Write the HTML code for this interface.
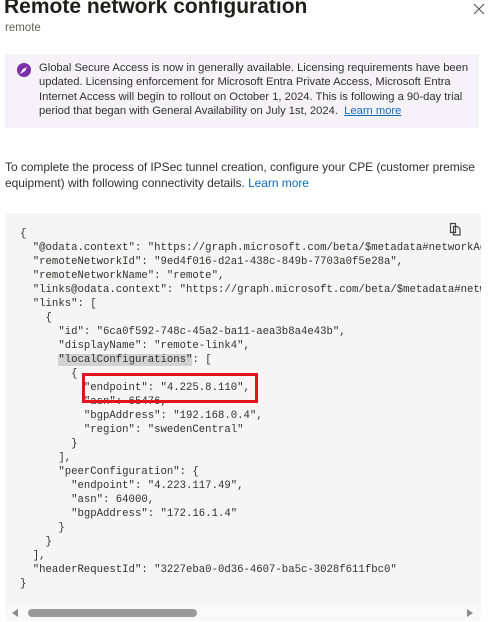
<!DOCTYPE html>
<html><head><meta charset="utf-8"><style>
html,body{margin:0;padding:0;background:#fff;width:491px;height:622px;overflow:hidden;font-family:"Liberation Sans",sans-serif;color:#323130}
.t{position:absolute;left:4px;top:-5px;font-size:21px;font-weight:600;color:#201f1e;white-space:nowrap}
.s{position:absolute;left:5px;top:22px;font-size:11.5px;color:#605e5c}
.x{position:absolute;left:472px;top:2px}
.ban{position:absolute;left:5px;top:54px;width:474px;height:74px;background:#f6f2fa}
.bt{position:absolute;left:39px;top:61px;width:440px;font-size:11.2px;line-height:14.4px;color:#323130}
.bt a,.p a{color:#0f6cbd}
.bt a{text-decoration:underline}
.ic{position:absolute;left:17px;top:63px;width:14px;height:14px;border-radius:50%;background:#7b2fa8}
.p{position:absolute;left:5px;top:159px;width:486px;font-size:12px;line-height:16px;letter-spacing:-0.05px}
.code{position:absolute;left:5px;top:213px;width:476px;height:392px;background:#f5f5f5;overflow:hidden}
pre{margin:0;position:absolute;left:15px;top:14px;font-family:"Liberation Mono",monospace;font-size:10.65px;line-height:14px;color:#323130}
.hl{background:#d2d2d2}
.red{position:absolute;left:82px;top:373px;width:170px;height:24px;border:3px solid #e3121b}
.sb{position:absolute;left:5px;top:605px;width:476px;height:16px;background:#f9f9f9}
.th{position:absolute;left:28px;top:609px;width:169px;height:8px;border-radius:4px;background:#9a9a9a}
</style></head><body>
<div class="t">Remote network configuration</div>
<div class="s">remote</div>
<svg class="x" width="14" height="14" viewBox="0 0 14 14"><path d="M2 2L12 12M12 2L2 12" stroke="#555" stroke-width="1.1"/></svg>
<div class="ban"></div>
<div class="ic"><svg width="14" height="14" viewBox="0 0 14 14"><path d="M10 4L6 6 4 9 5 10 8 8 10 4Z" fill="#fff"/><path d="M4.5 9.5L3.5 10.5" stroke="#fff"/></svg></div>
<div class="bt">Global Secure Access is now in generally available. Licensing requirements have been updated. Licensing enforcement for Microsoft Entra Private Access, Microsoft Entra Internet Access will begin to rollout on October 1, 2024. This is following a 90-day trial period that began with General Availability on July 1st, 2024.&nbsp; <a>Learn more</a></div>
<div class="p">To complete the process of IPSec tunnel creation, configure your CPE (customer premise<br>equipment) with following connectivity details. <a>Learn more</a></div>
<div class="code">
<svg style="position:absolute;left:444px;top:9px" width="13" height="14" viewBox="0 0 13 14"><path d="M1.5 1.5h5l0 9h-5z M4.5 4.5h4l2.5 2.5v6h-6.5z" fill="none" stroke="#444" stroke-width="1.2"/></svg>
<pre>{
  "@odata.context": "https://graph.microsoft.com/beta/$metadata#networkAccess/connectivity",
  "remoteNetworkId": "9ed4f016-d2a1-438c-849b-7703a0f5e28a",
  "remoteNetworkName": "remote",
  "links@odata.context": "https://graph.microsoft.com/beta/$metadata#networkAccess",
  "links": [
    {
      "id": "6ca0f592-748c-45a2-ba11-aea3b8a4e43b",
      "displayName": "remote-link4",
      <span class="hl">"localConfigurations"</span>: [
        {
          "endpoint": "4.225.8.110",
          "asn": 65476,
          "bgpAddress": "192.168.0.4",
          "region": "swedenCentral"
        }
      ],
      "peerConfiguration": {
        "endpoint": "4.223.117.49",
        "asn": 64000,
        "bgpAddress": "172.16.1.4"
      }
    }
  ],
  "headerRequestId": "3227eba0-0d36-4607-ba5c-3028f611fbc0"
}</pre>
</div>
<div class="red"></div>
<div class="sb"></div>
<div class="th"></div>
<svg style="position:absolute;left:12px;top:609px" width="6" height="8"><path d="M6 0L0 4 6 8Z" fill="#8a8a8a"/></svg>
<svg style="position:absolute;left:467px;top:609px" width="6" height="8"><path d="M0 0L6 4 0 8Z" fill="#8a8a8a"/></svg>
</body></html>
